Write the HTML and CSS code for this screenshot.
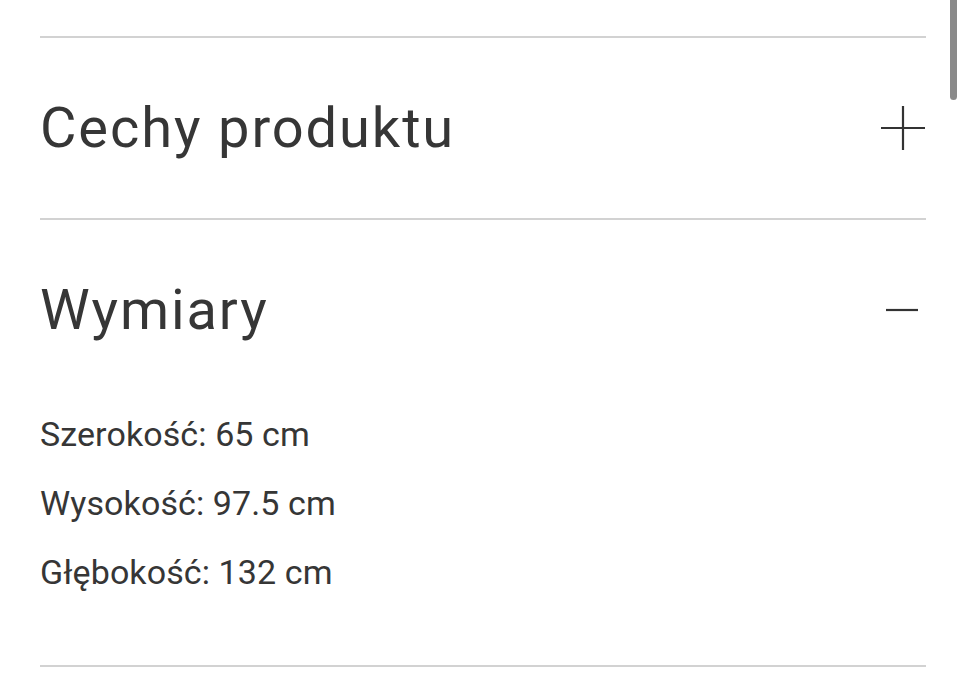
FILE: index.html
```html
<!DOCTYPE html>
<html lang="pl">
<head>
<meta charset="utf-8">
<title>Wymiary</title>
<link rel="stylesheet" href="styles.css">
</head>
<body>
<div class="page">
  <section class="acc">
    <div class="acc-head">
      <h2 class="acc-title">Cechy produktu</h2>
      <svg class="icon" width="44" height="44" viewBox="0 0 44 44"><path d="M22 0V44M0 22H44" stroke="#333" stroke-width="2.2" fill="none"/></svg>
    </div>
  </section>
  <section class="acc">
    <div class="acc-head">
      <h2 class="acc-title">Wymiary</h2>
      <svg class="icon" width="44" height="44" viewBox="0 0 44 44"><path d="M5 22H37" stroke="#333" stroke-width="2.2" fill="none"/></svg>
    </div>
    <div class="acc-body">
      <p>Szerokość: 65 cm</p>
      <p>Wysokość: 97.5 cm</p>
      <p>Głębokość: 132 cm</p>
    </div>
  </section>
  <div class="end"></div>
</div>
<div class="scrollbar"></div>
</body>
</html>
```
FILE: styles.css
```css
html, body {
  margin: 0;
  padding: 0;
  background: #fff;
}
body {
  font-family: Roboto, "Liberation Sans", sans-serif;
  color: #333;
  width: 965px;
  height: 699px;
  overflow: hidden;
  position: relative;
}
.page {
  padding: 36px 39px 0 40px;
}
.acc {
  border-top: 2px solid #d2d2d2;
}
.acc-head {
  height: 180px;
  display: flex;
  align-items: center;
  justify-content: space-between;
}
.acc-title {
  margin: 0;
  font-weight: 400;
  font-size: 56px;
  letter-spacing: 1.9px;
  line-height: 1;
  color: #363636;
}
.icon {
  display: block;
  margin-right: 1px;
}
.acc-body {
  padding-bottom: 58px;
}
.acc-body p {
  margin: 0;
  font-size: 34px;
  line-height: 69px;
  letter-spacing: 0.1px;
  color: #363636;
}
.end {
  border-top: 2px solid #d2d2d2;
}
.scrollbar {
  position: absolute;
  top: -4px;
  left: 950px;
  width: 7px;
  height: 104px;
  border-radius: 4px;
  background: #8a8a8a;
}
```
